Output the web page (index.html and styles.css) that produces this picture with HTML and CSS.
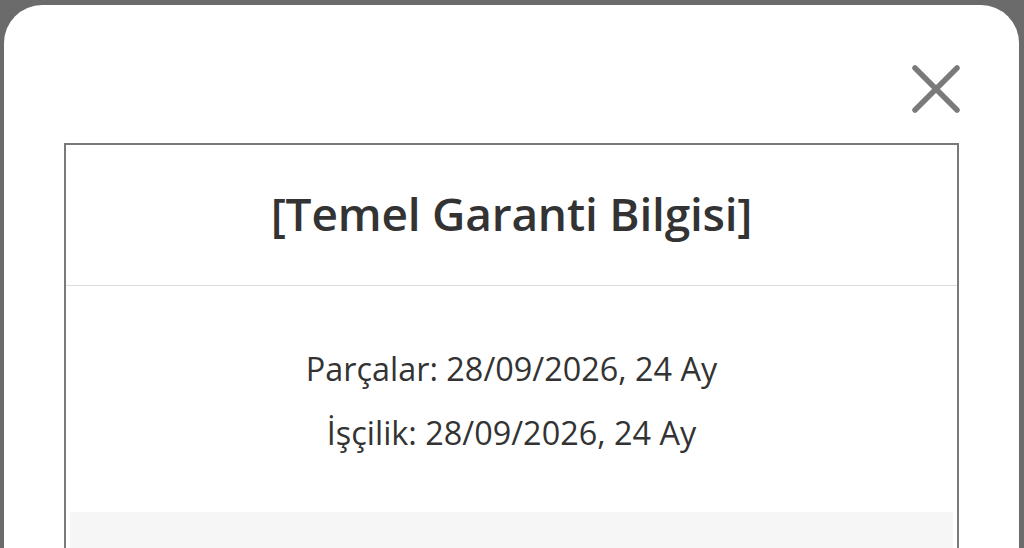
FILE: index.html
```html
<!DOCTYPE html>
<html lang="tr">
<head>
<meta charset="utf-8">
<title>Temel Garanti Bilgisi</title>
<link rel="stylesheet" href="styles.css">
</head>
<body>
<div class="dialog">
  <div class="dialog-head">
    <button class="close" aria-label="Kapat">
      <svg width="52" height="52" viewBox="0 0 52 52"><path d="M5 6 L47 48 M47 6 L5 48" stroke="#7a7a7a" stroke-width="5.5" stroke-linecap="round" fill="none"/></svg>
    </button>
  </div>
  <div class="card">
    <h1 class="card-title">[Temel Garanti Bilgisi]</h1>
    <div class="card-body">
      <p>Parçalar: 28/09/2026, 24 Ay</p>
      <p>İşçilik: 28/09/2026, 24 Ay</p>
    </div>
    <div class="card-foot"></div>
  </div>
</div>
</body>
</html>
```

FILE: styles.css
```css
html, body {
  margin: 0;
  height: 100%;
  overflow: hidden;
}
body {
  background: #6b6b6b;
  padding: 5px 5px 0 4px;
  box-sizing: border-box;
  font-family: "Open Sans", "Noto Sans", sans-serif;
  color: #333;
}
.dialog {
  background: #fff;
  border-radius: 38px 38px 0 0;
  height: 100%;
  padding: 0 60px;
  box-sizing: border-box;
  display: flex;
  flex-direction: column;
}
.dialog-head {
  height: 138px;
  flex: none;
  display: flex;
  justify-content: flex-end;
  align-items: flex-start;
  padding-top: 57px;
  box-sizing: border-box;
  margin-right: -3px;
}
.close {
  border: 0;
  background: none;
  padding: 0;
  width: 52px;
  height: 52px;
  cursor: pointer;
}
.close svg { display: block; }
.card {
  flex: 1;
  border: 2px solid #7a7a7a;
  border-bottom: 0;
  padding: 0 4px;
  display: flex;
  flex-direction: column;
}
.card-title {
  margin: 0 -4px;
  height: 141px;
  padding-bottom: 4px;
  box-sizing: border-box;
  flex: none;
  border-bottom: 1px solid #dcdcdc;
  display: flex;
  align-items: center;
  justify-content: center;
  font-size: 46px;
  font-weight: 600;
  color: #333;
  letter-spacing: -0.2px;
}
.card-body {
  flex: none;
  text-align: center;
  padding: 50px 0 48px;
  font-size: 32.4px;
  font-weight: 400;
  color: #333;
}
.card-body p {
  margin: 0;
  line-height: 64px;
}
.card-foot {
  flex: 1;
  background: #f6f6f6;
}
```
